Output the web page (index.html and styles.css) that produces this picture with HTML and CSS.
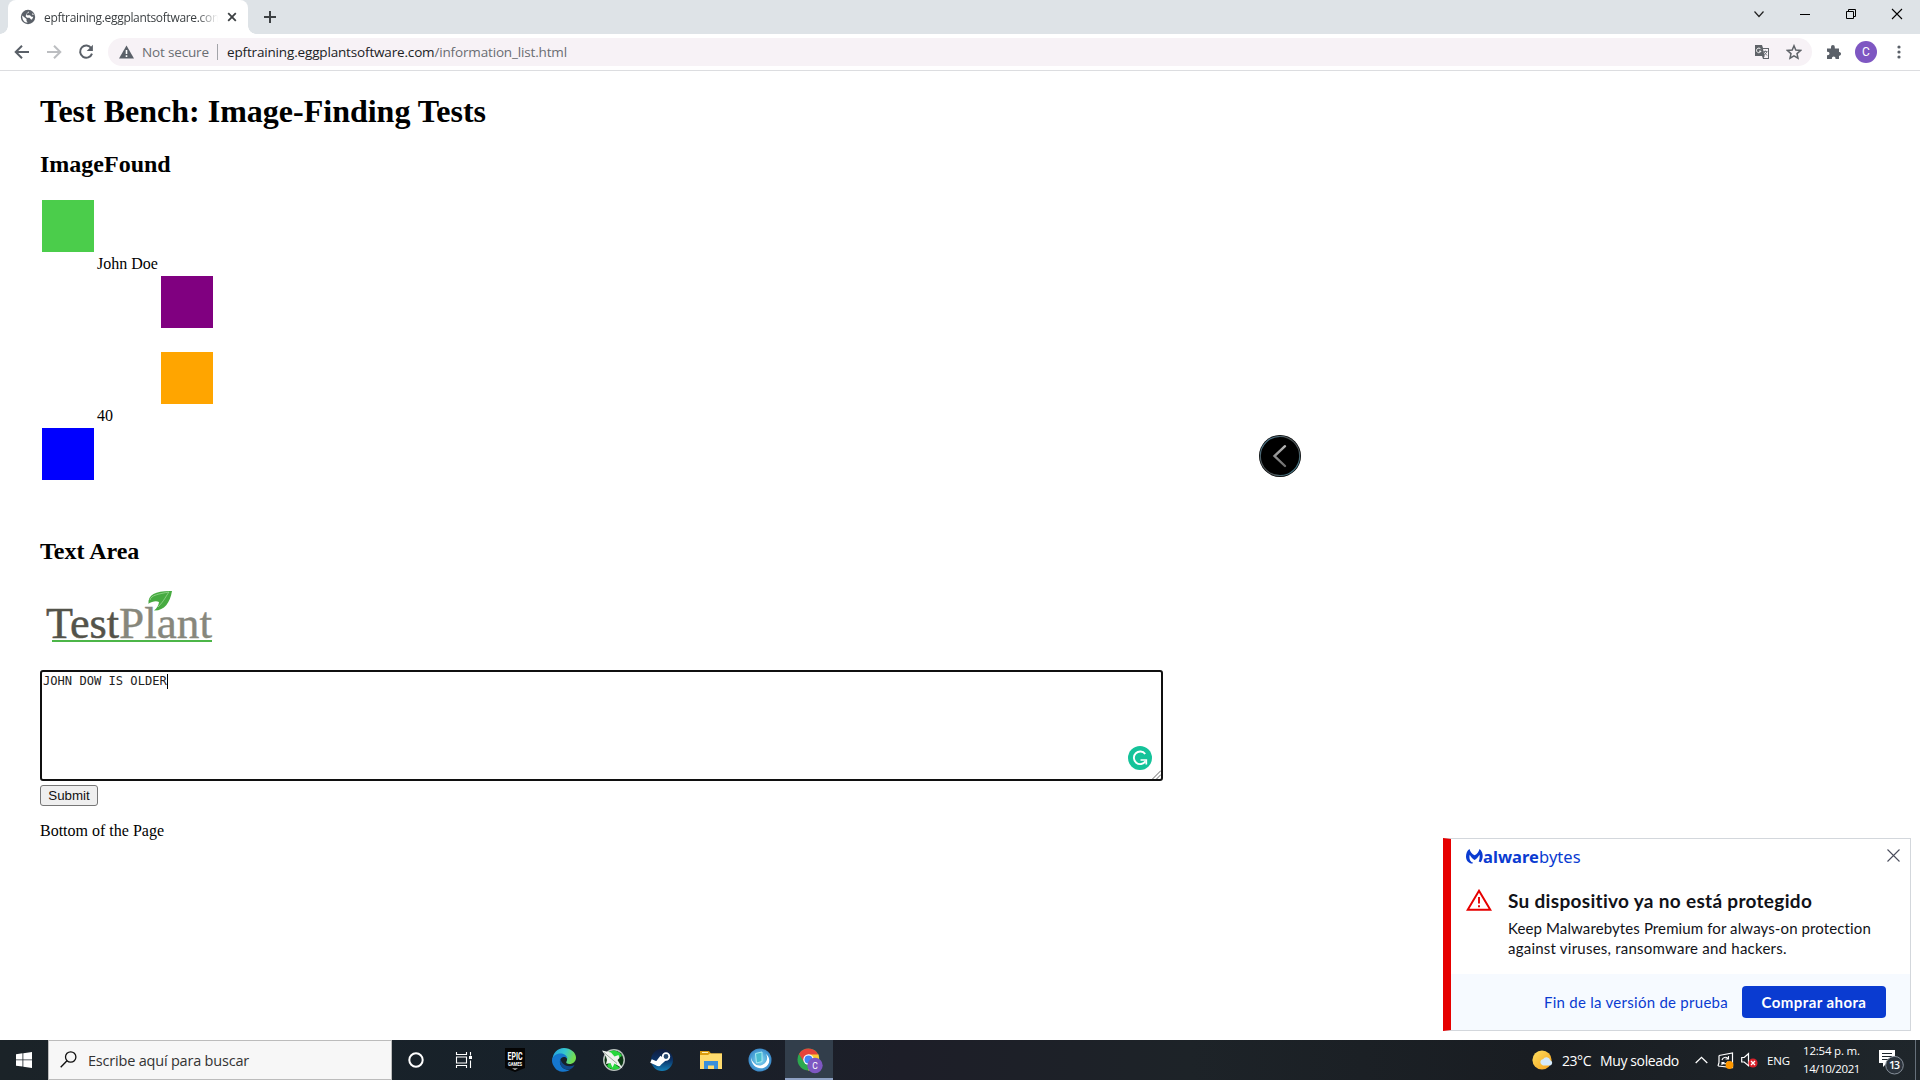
FILE: index.html
```
<!DOCTYPE html>
<html lang="en">
<head>
<meta charset="utf-8">
<title>epftraining.eggplantsoftware.com/information_list.html</title>
<link rel="stylesheet" href="styles.css">
</head>
<body>
<div class="screen">
  <header class="tabstrip">
    <div class="tab">
      <svg class="globe" width="16" height="16" viewBox="0 0 16 16"><circle cx="8" cy="8" r="7.2" fill="#5a6068"/><path d="M2.2 6.5 6.5 10v2l1.2 1.5C4.5 14 2 11 2.200 6.500ZM9 2.200 8.500 4 6.800 4.600v1.600H10l1.500 1.500h1.800L12 10.500h-1L9.500 8.800H7L5.600 7.200l1-2.600ZM12.800 4l1 2-1.800-.500Z" fill="#fff"/></svg>
      <span class="tab-title">epftraining.eggplantsoftware.com</span>
      <svg class="tab-close" width="10" height="10" viewBox="0 0 10 10"><path d="M1.200 1.200 8.800 8.800M8.800 1.200 1.200 8.800" stroke="#3c4043" stroke-width="1.800"/></svg>
      <i class="curve left"></i><i class="curve right"></i>
    </div>
    <svg class="newtab" width="14" height="14" viewBox="0 0 14 14"><path d="M7 1v12M1 7h12" stroke="#3c4043" stroke-width="2"/></svg>
    <div class="window-controls">
      <svg width="46" height="28" viewBox="0 0 46 28"><path d="m18.500 11.500 4.500 5 4.500-5" fill="none" stroke="#222" stroke-width="1.200"/></svg>
      <svg width="46" height="28" viewBox="0 0 46 28"><path d="M18 14.500h10" stroke="#000"/></svg>
      <svg width="46" height="28" viewBox="0 0 46 28"><path d="M18.500 11.500h7v7h-7zM20.500 11.500v-2h7v7h-2" fill="none" stroke="#000"/></svg>
      <svg width="46" height="28" viewBox="0 0 46 28"><path d="m18 9 10 10M28 9 18 19" stroke="#000" stroke-width="1.100"/></svg>
    </div>
  </header>
  <nav class="toolbar">
    <svg class="nav" width="16" height="16" viewBox="0 0 16 16"><path d="M15 8H2M8 1.700 1.700 8 8 14.300" fill="none" stroke="#5a6068" stroke-width="2"/></svg>
    <svg class="nav" width="16" height="16" viewBox="0 0 16 16"><path d="M1 8h13M8 1.700 14.300 8 8 14.300" fill="none" stroke="#bcbec1" stroke-width="2"/></svg>
    <svg class="nav" width="16" height="16" viewBox="0 0 16 16"><path d="M13.300 4.200A6.100 6.100 0 1 0 14 9.600" fill="none" stroke="#5a6068" stroke-width="2"/><path d="M14.900.800V7H8.700Z" fill="#5a6068"/></svg>
    <div class="omnibox">
      <svg width="15" height="14" viewBox="0 0 15 14"><path d="M7.500.500 15 13.500H0Z" fill="#5a6068"/><path d="M7.500 5v4M7.500 10.200v1.700" stroke="#fff" stroke-width="1.600"/></svg>
      <span class="notsecure">Not secure</span>
      <span class="divider"></span>
      <span class="url">epftraining.eggplantsoftware.com<em>/information_list.html</em></span>
      <svg class="translate" width="14" height="14" viewBox="0 0 14 14"><path d="M0 0h7l1 3h6v11H8l-1-3H0Z" fill="#5f6368"/><path d="M8 4h5v9H8.700l1-2Z" fill="#f7f2f6"/><path d="M5.800 4.200A2.300 2.300 0 1 0 6 6.200H4" fill="none" stroke="#fff"/><path d="M8.200 6.500h4.300M10.300 5.500v1M9 7l3 3.500M12 7l-2.800 3" fill="none" stroke="#777b80"/></svg>
      <svg width="16" height="16" viewBox="0 0 16 16"><path d="m8 1.800 1.800 4.300 4.700.400-3.500 3.100 1 4.600-4-2.400-4 2.400 1-4.600L1.500 6.500l4.700-.400Z" fill="none" stroke="#5f6368" stroke-width="1.500"/></svg>
    </div>
    <svg class="puzzle" width="16" height="16" viewBox="0 0 16 16"><path d="M1 4.500h4V3a1.900 1.900 0 0 1 3.800 0v1.500H13V8h.600a1.900 1.900 0 0 1 0 3.700H13V15H9.500v-.700a1.800 1.800 0 0 0-3.600 0v.700H1v-3.700h.700a1.800 1.800 0 0 0 0-3.600H1Z" fill="#5a6068"/></svg>
    <span class="avatar">C</span>
    <svg class="menu" width="4" height="14" viewBox="0 0 4 14"><g fill="#5a6068"><circle cx="2" cy="2" r="1.600"/><circle cx="2" cy="7" r="1.600"/><circle cx="2" cy="12" r="1.600"/></g></svg>
  </nav>

  <main class="page">
    <h1>Test Bench: Image-Finding Tests</h1>
    <h2>ImageFound</h2>
    <div class="swatches">
      <span class="green"></span><b></b><b></b>
      <b></b><p>John Doe</p><b></b>
      <b></b><b></b><span class="purple"></span>
      <b></b><b></b><b></b>
      <b></b><b></b><span class="orange"></span>
      <b></b><p>40</p><b></b>
      <span class="blue"></span><b></b><b></b>
    </div>
    <h2>Text Area</h2>
    <svg class="logo" width="180" height="80" viewBox="0 0 180 80">
      <text x="6" y="58" font-size="45" fill="#54534a" stroke="#54534a" stroke-width=".5" textLength="73" lengthAdjust="spacingAndGlyphs">Test</text>
      <text x="79" y="58" font-size="45" fill="#87877c" stroke="#87877c" stroke-width=".4" textLength="93" lengthAdjust="spacingAndGlyphs">Plant</text>
      <path d="M12 61h160" stroke="#4cb648" stroke-width="2.200"/>
      <path d="M108.500 24C107.500 14 117 10.500 132 11c-2 12-8 20-18 19.500 3-2 4.500-5 5-8.500-3-1.500-7-.500-11 2Z" fill="#47ab41"/>
      <path d="M110 20c1-5 9-6 19-8-3 4-5 9-11 15" fill="none" stroke="#a5dc9c" stroke-width=".7"/>
    </svg>
    <div class="textarea" role="textbox">JOHN DOW IS OLDER<span class="caret"></span>
      <svg class="grammar" width="24" height="24" viewBox="0 0 24 24"><circle cx="12" cy="12" r="12" fill="#15c39a"/><path d="M17.200 8A6.300 6.300 0 1 0 17.500 15.200" fill="none" stroke="#fff" stroke-width="1.900"/><path d="M12.500 14h5.800v4.500" fill="none" stroke="#fff" stroke-width="1.700"/></svg>
      <svg class="grip" width="9" height="9" viewBox="0 0 9 9"><path d="M.500 9 9 .500M4.500 9 9 4.500" stroke="#555" stroke-width=".9"/></svg>
    </div>
    <button class="submit">Submit</button>
    <p class="bottom">Bottom of the Page</p>
  </main>

  <svg class="floating" width="42" height="42" viewBox="0 0 42 42"><defs><linearGradient id="ring" x1="0" y1="0" x2="1" y2="1"><stop offset="0" stop-color="#4b88a8"/><stop offset=".35" stop-color="#4d5558"/><stop offset=".65" stop-color="#4d5558"/><stop offset="1" stop-color="#3e8ba2"/></linearGradient><linearGradient id="arrow" x1="0" y1="0" x2="0" y2="1"><stop offset="0" stop-color="#b5b5b5"/><stop offset="1" stop-color="#6d6d6d"/></linearGradient></defs><circle cx="21" cy="21" r="21" fill="#000"/><circle cx="21" cy="21" r="19.700" fill="none" stroke="url(#ring)" stroke-width="1.200"/><path d="M26 11.200 15.500 21 26 31" fill="none" stroke="url(#arrow)" stroke-width="2.400" stroke-linecap="round"/></svg>

  <section class="toast">
    <div class="toast-head">
      <svg width="17" height="15" viewBox="0 0 17 15"><path d="M3.500 0C4.200 3 6 5 8.600 6.300 11.200 5 12.800 3 13.500 0c2 1.500 3.200 4 3.200 7 0 2.500-.8 4.700-2 6.300l-2-.8c.8-2 1.200-4.500.8-6.800C12.300 8 10.700 9.700 8.600 11 6.500 9.700 4.800 8 3.700 5.700 3 8.500 3.500 11.500 5.700 13.200l1.300.4-.5 1C2.500 14.500 0 11.500 0 7.500 0 4.300 1.300 1.500 3.500 0Z" fill="#0a3bd1"/></svg>
      <span class="brand"><b>alware</b>bytes</span>
      <svg class="toast-close" width="13" height="13" viewBox="0 0 13 13"><path d="m.500.500 12 12M12.500.500l-12 12" stroke="#4a4d5c" stroke-width="1.100"/></svg>
    </div>
    <div class="toast-body">
      <svg width="26" height="22" viewBox="0 0 26 22"><path d="M13 1.800 24.300 20.800H1.700Z" fill="none" stroke="#e60000" stroke-width="2"/><path d="M13 8v6.500M13 16.300v2" stroke="#e60000" stroke-width="1.900"/></svg>
      <div>
        <h3>Su dispositivo ya no está protegido</h3>
        <p class="l1">Keep Malwarebytes Premium for always-on protection</p>
        <p class="l2">against viruses, ransomware and hackers.</p>
      </div>
    </div>
    <div class="toast-foot"><a>Fin de la versión de prueba</a><button>Comprar ahora</button></div>
  </section>

  <footer class="taskbar">
    <div class="start"><svg width="16" height="16" viewBox="0 0 16 16"><path d="M0 2.200 6.500 1.300v6.200H0ZM7.300 1.200 16 0v7.500H7.300ZM0 8.300h6.500v6.300L0 13.700ZM7.300 8.300H16V16l-8.700-1.300Z" fill="#fff"/></svg></div>
    <div class="search"><svg width="17" height="17" viewBox="0 0 17 17"><circle cx="10.700" cy="6" r="5.200" fill="none" stroke="#111" stroke-width="1.300"/><path d="M7 9.800.700 16.200" stroke="#111" stroke-width="1.400"/></svg><span>Escribe aquí para buscar</span></div>
    <div class="apps">
      <div><svg width="24" height="24" viewBox="0 0 24 24"><circle cx="12" cy="12" r="6.700" fill="none" stroke="#fff" stroke-width="2"/></svg></div>
      <div><svg width="24" height="24" viewBox="0 0 24 24"><path d="M4.500 4v2.500h10V4M4.500 20v-2.500h10V20M4.500 9h10v6h-10zM18.500 4v3.500M18.500 12.500V20" fill="none" stroke="#fff" stroke-width="1.100"/><path d="M17 8h3v3h-3z" fill="#fff"/></svg></div>
      <div><svg width="24" height="24" viewBox="0 0 24 24"><path d="M2 0h20v20l-10 4-10-4Z" fill="#050505"/><g fill="#fff" font-family="Roboto,sans-serif" font-weight="700" text-anchor="middle"><text x="12" y="12" font-size="11.500" textLength="15" lengthAdjust="spacingAndGlyphs">EPIC</text><text x="12" y="18" font-size="4.600" textLength="14" lengthAdjust="spacingAndGlyphs">GAMES</text></g><path d="m9 20.500 3 1.300 3-1.300Z" fill="#fff"/></svg></div>
      <div><svg width="24" height="24" viewBox="0 0 24 24"><defs><linearGradient id="edge" x1="0" y1="0" x2="1" y2=".3"><stop offset="0" stop-color="#229de2"/><stop offset=".55" stop-color="#36c7cf"/><stop offset="1" stop-color="#73de50"/></linearGradient></defs><path d="M.500 12C.500 5 5.500 0 12 0s12 4.500 12 9.500c0 4-3 6.500-6.500 6.500-2.500 0-4-1-3-2.500 1.600-2.300 0-5.500-3.500-5.500C6 8 1.500 10 .500 12Z" fill="url(#edge)"/><path d="M0 12c.500-4 4.500-6.500 8.500-6.500 4 0 7 2.500 7 5.500-2-3-7-2.500-7.500 2C7.500 18 12 23 18.500 21.500 16 24 6 26 2 18.500 0 15.500 0 13.500 0 12Z" fill="#1577ce"/><path d="M8.500 10.500c-2.500 6 2.500 11 7.500 11 3 0 5.500-2 6.500-4.500C16 20 9.500 17 8.500 10.500Z" fill="#114a8b"/></svg></div>
      <div><svg width="24" height="24" viewBox="0 0 24 24"><circle cx="13" cy="12" r="11" fill="#b9c2be"/><circle cx="13" cy="12" r="9.500" fill="#0c3714"/><path d="M8 4a9 9 0 0 1 13 4l-4 2-2 7 4 3A10 10 0 0 1 6 18l4-6Z" fill="#26d63c"/><path d="M1 2.500 10 4.500l3.500 4 4-1.500 1 3-2 2 5 8.500-8-5-2 4-2-4.500-4.500 1 1-4L5 8.500Z" fill="#eff2ef"/><path d="m3 4.500 13 11" stroke="#839087" stroke-width=".8"/></svg></div>
      <div><svg width="24" height="24" viewBox="0 0 24 24"><defs><linearGradient id="steam" x1="0" y1="0" x2="0" y2="1"><stop offset="0" stop-color="#101c3c"/><stop offset=".5" stop-color="#0b3266"/><stop offset="1" stop-color="#1380b8"/></linearGradient></defs><circle cx="12" cy="12" r="11" fill="url(#steam)"/><path d="M1 13 7 15.500 12 9" fill="none" stroke="#fff" stroke-width="4"/><path d="m8 17 8-7" stroke="#fff" stroke-width="3.500"/><circle cx="16" cy="8.500" r="3.300" fill="#26486f" stroke="#fff" stroke-width="1.800"/><circle cx="8.500" cy="16" r="2.300" fill="#fff"/></svg></div>
      <div><svg width="24" height="24" viewBox="0 0 24 24"><path d="M1 3h9l2 2.500h11V9H1Z" fill="#dc9c10"/><path d="M3 4.500h6" stroke="#fff0b4"/><path d="M1 7h8l2-1.500h12V21H1Z" fill="#ffdb6e"/><path d="M5 21v-8h14v8h-4v-3.500H9V21Z" fill="#3a8fdb"/></svg></div>
      <div><svg width="24" height="24" viewBox="0 0 24 24"><defs><radialGradient id="sky"><stop offset="0" stop-color="#8fdcf4"/><stop offset=".7" stop-color="#4aa4d8"/><stop offset="1" stop-color="#3c88c8"/></radialGradient></defs><circle cx="12" cy="12" r="11.500" fill="url(#sky)"/><path d="M3 9C4 15 9 19 14 17s6.500-7 4-11c5 4 4 11-1.500 13.500S3 18.500 3 9Z" fill="#fff"/><path d="M7.500 5.500 14 4v9.500L8.500 15Z" fill="#48bdd0" stroke="#a8ebf2"/></svg></div>
      <div class="active"><svg width="26" height="26" viewBox="0 0 26 26"><circle cx="11.500" cy="11.500" r="11" fill="#2da94f"/><path d="M11.500.500A11 11 0 0 1 21.500 7H12L7 14 2 6A11 11 0 0 1 11.500.500Z" fill="#e5443a"/><path d="M11.500 6.500h10c2.500 8-3.500 16-10.500 16l5-9Z" fill="#fbcb35"/><circle cx="11.500" cy="11.500" r="5.200" fill="#fff"/><circle cx="11.500" cy="11.500" r="4" fill="#4285f4"/><circle cx="18" cy="17.500" r="7.700" fill="#7e57c2"/><text x="18" y="20.700" font-family="Roboto,sans-serif" font-size="8.500" fill="#fff" text-anchor="middle">C</text></svg></div>
    </div>
    <div class="tray">
      <svg width="22" height="20" viewBox="0 0 22 20"><defs><linearGradient id="sun" x1="0" y1="0" x2="1" y2="1"><stop offset="0" stop-color="#ffdf60"/><stop offset="1" stop-color="#f5a11c"/></linearGradient></defs><circle cx="10" cy="10" r="9.600" fill="url(#sun)"/><path d="M11 15.500a3.200 3.200 0 0 1 0-6.300 4 4 0 0 1 7.300 1 2.800 2.800 0 0 1 0 5.300Z" fill="#d5eafb"/></svg>
      <span class="temp">23°C</span><span class="sky">Muy soleado</span>
      <svg class="chev" width="13" height="8" viewBox="0 0 13 8"><path d="m.700 7 5.800-5.700L12.300 7" fill="none" stroke="#fff" stroke-width="1.300"/></svg>
      <svg class="net" width="17" height="17" viewBox="0 0 17 17"><path d="M2 3.500 15.500 1v14.500L1 14M2 3.500v7M1 14l1-3.500" fill="none" stroke="#fff" stroke-width="1.200"/><path d="M5 8a3.500 3.500 0 0 1 6-1.500M11.500 4v3h-3M11 9.500A3.500 3.500 0 0 1 5.500 11M5 13v-2.500h2.500" fill="none" stroke="#fff" stroke-width="1.100"/><circle cx="12.500" cy="13" r="3.900" fill="#ff9800"/></svg>
      <svg class="vol" width="17" height="16" viewBox="0 0 17 16"><path d="M.700 5.500h2.500L7.500 1.700v12L3.200 10H.700Z" fill="none" stroke="#fff" stroke-width="1.200"/><circle cx="12" cy="11" r="4.600" fill="#d8202a"/><path d="m10 9 4 4M14 9l-4 4" stroke="#fff" stroke-width="1.300"/></svg>
      <span class="lang">ENG</span>
      <div class="clock"><span>12:54 p. m.</span><span class="date">14/10/2021</span></div>
      <svg class="notes" width="26" height="26" viewBox="0 0 26 26"><path d="M0 1h16v13H8l-4 4v-4H0Z" fill="#fff"/><path d="M3 4.500h10M3 7.500h10M3 10.500h10" stroke="#1d262c"/><circle cx="15.500" cy="16.200" r="8.800" fill="#2b333c" stroke="#87909a"/><text x="15.500" y="20.300" font-family="Open Sans,sans-serif" font-size="11" font-weight="600" fill="#fff" text-anchor="middle" textLength="11">13</text></svg>
      <span class="peek"></span>
    </div>
  </footer>
</div>
</body>
</html>
```
FILE: styles.css
```
* { box-sizing: border-box; }
body { margin: 0; background: #fff; }
h1, h2, h3, p { margin: 0; }
svg { display: block; flex: none; }
.screen { width: 1920px; height: 1080px; position: relative; display: flex; flex-direction: column; overflow: hidden; font-family: "Open Sans", sans-serif; }

/* browser frame */
.tabstrip { height: 34px; background: #dee3e7; display: flex; padding-left: 8px; align-items: flex-start; }
.tab { position: relative; width: 240px; height: 34px; background: #fff; border-radius: 8px 8px 0 0; display: flex; align-items: center; padding-left: 12px; }
.tab-title { width: 174px; margin-left: 8px; overflow: hidden; white-space: nowrap; font-size: 12px; letter-spacing: -.32px; color: #3c4043; -webkit-mask-image: linear-gradient(90deg, #000 88%, transparent); mask-image: linear-gradient(90deg, #000 88%, transparent); }
.tab-close { margin-left: 9px; }
.curve { position: absolute; bottom: 0; width: 8px; height: 8px; }
.curve.left { left: -8px; background: radial-gradient(circle at 0 0, transparent 7.500px, #fff 8px); }
.curve.right { right: -8px; background: radial-gradient(circle at 100% 0, transparent 7.500px, #fff 8px); }
.newtab { margin: 10px 0 0 15px; }
.window-controls { display: flex; margin-left: auto; }
.toolbar { height: 37px; border-bottom: 1px solid #dcdde0; display: flex; align-items: center; padding-left: 14px; }
.nav { margin-right: 16px; }
.omnibox { width: 1704px; height: 28px; margin-left: -2px; border-radius: 14px; background: #f7f2f6; display: flex; align-items: center; padding: 0 10px 0 11px; font-size: 13.500px; letter-spacing: -.16px; white-space: nowrap; }
.notsecure { color: #6a6d72; margin-left: 8px; width: 67px; }
.divider { width: 1px; height: 16px; background: #a3a4a9; margin: 0 9px 0 8px; }
.url { color: #202124; }
.url em { font-style: normal; color: #6a6d72; }
.translate { margin: 0 17px 0 auto; }
.puzzle { margin-left: 14px; }
.avatar { width: 22px; height: 22px; margin-left: 13px; border-radius: 50%; background: #7e57c2; color: #fff; font: 12px/22px Roboto, sans-serif; text-align: center; }
.menu { margin-left: 20px; }

/* page content */
.page { height: 969px; flex: none; padding: 22px 0 0 40px; font-family: "Liberation Serif", serif; font-size: 16px; color: #000; display: flex; flex-direction: column; align-items: flex-start; }
.page h1 { font-size: 32px; line-height: 37px; height: 37px; }
.page h2 { font-size: 24px; line-height: 27px; }
.page h1 + h2 { margin-top: 21px; }
.swatches { display: grid; grid-template-columns: 52px 63px 52px; grid-template-rows: 52px 20px 52px 20px 52px 20px 52px; gap: 2px; padding: 2px; margin: 20px 0 56px; }
.swatches p { padding: 1px; line-height: 18px; white-space: nowrap; }
.green { background: #4bcd4b; }
.purple { background: #800080; }
.orange { background: #ffa500; }
.blue { background: #00f; }
.logo { margin: 15px 0 10px; font-family: "Liberation Serif", serif; }
.textarea { position: relative; width: 1123px; height: 111px; border: 2px solid #101010; border-radius: 3px; padding: 2px 2px 2px 1px; font: 12.100px/14px "DejaVu Sans Mono", monospace; color: #222; }
.caret { display: inline-block; width: 1px; height: 15px; background: #000; vertical-align: -4px; margin-top: -3px; }
.grammar { position: absolute; right: 9px; bottom: 9px; }
.grip { position: absolute; right: 0; bottom: 0; }
.submit { width: 58px; height: 21px; margin-top: 4px; padding: 0; border: 1px solid #767676; border-radius: 3px; background: #efefef; font: 13.333px "Liberation Sans", sans-serif; color: #111; }
.bottom { margin-top: 16px; line-height: 18px; }
.floating { position: absolute; left: 1259px; top: 435px; }

/* notification */
.toast { position: absolute; left: 1443px; top: 838px; width: 468px; height: 193px; border: 1px solid #d3d7dc; border-left: 8px solid #e60000; background: #fff; display: flex; flex-direction: column; font-family: Lato, sans-serif; }
.toast-head { height: 35px; display: flex; align-items: center; padding: 0 10px 0 15px; }
.brand { color: #0a3bd1; font: 16.500px/20px "Noto Sans", sans-serif; letter-spacing: .05px; }
.toast-close { margin: -3px 0 0 auto; }
.toast-body { height: 100px; display: flex; gap: 16px; padding: 14px 0 0 15px; color: #111218; }
.toast-body svg { margin-top: 1px; }
.toast h3 { font-size: 19px; line-height: 26px; font-weight: 700; letter-spacing: .310px; white-space: nowrap; margin: 0 0 4px; }
.toast p { font-size: 15px; line-height: 20px; letter-spacing: .11px; white-space: nowrap; }
.toast .l2 { letter-spacing: .23px; }
.toast-foot { flex: 1; background: #f6faff; display: flex; align-items: center; justify-content: flex-end; gap: 14px; padding-right: 24px; font-size: 15px; color: #0a3bd1; }
.toast-foot a { letter-spacing: .27px; }
.toast-foot button { width: 144px; height: 32px; padding: 0; border: 0; border-radius: 4px; background: #0a3bd1; color: #fff; font: 700 15px Lato, sans-serif; letter-spacing: .42px; }

/* taskbar */
.taskbar { height: 40px; background: linear-gradient(90deg, #1b2328, #17212a 30%, #1d1e28 47%, #1d2328 62%, #191d22 80%, #1f262b); display: flex; align-items: stretch; color: #fff; }
.start { width: 48px; display: grid; place-items: center; }
.search { width: 344px; background: #f7f7f7; border: 1px solid #bcbcbc; display: flex; align-items: center; gap: 11px; padding-left: 11px; color: #333; font-size: 14.500px; letter-spacing: -.2px; }
.search svg { margin-top: -1px; }
.apps { display: flex; }
.apps > div { width: 48px; margin-right: 1px; display: grid; place-items: center; }
.apps > div:first-child { margin-right: 0; }
.apps > div:nth-child(2) { margin-right: 3px; }
.apps .active { background: #323e4b; border-bottom: 2px solid #8fa2c5; padding: 3px 0 0 2px; }
.tray { flex: 1; display: flex; align-items: center; justify-content: flex-end; white-space: nowrap; }
.temp { width: 29px; margin-left: 8px; font-size: 14px; letter-spacing: -.450px; }
.sky { width: 79px; margin-left: 9px; font-size: 14px; letter-spacing: -.380px; }
.chev { margin-left: 16px; }
.net { margin-left: 9px; }
.vol { margin-left: 7px; }
.lang { width: 23px; margin-left: 9px; font-size: 11.500px; letter-spacing: -.1px; }
.clock { width: 58px; margin-left: 13px; display: flex; flex-direction: column; font-size: 11.500px; line-height: 18px; letter-spacing: -.2px; }
.clock .date { letter-spacing: -.4px; }
.notes { margin: 4px 10px 0 18px; }
.peek { width: 1px; height: 40px; background: #66707a; margin-right: 4px; }
```
